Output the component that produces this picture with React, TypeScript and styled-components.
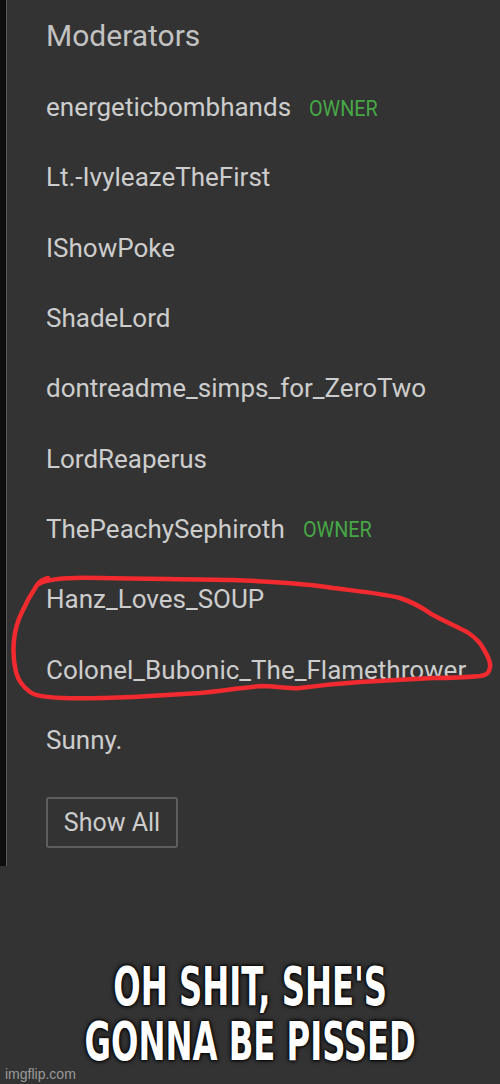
import React from "react";
import styled, { createGlobalStyle } from "styled-components";

const GlobalStyle = createGlobalStyle`
  html, body {
    margin: 0;
    padding: 0;
    background: #333333;
  }
  body {
    font-family: Roboto, "Liberation Sans", sans-serif;
  }
`;

interface Moderator {
  name: string;
  owner?: boolean;
}

const moderators: Moderator[] = [
  { name: "energeticbombhands", owner: true },
  { name: "Lt.-IvyleazeTheFirst" },
  { name: "IShowPoke" },
  { name: "ShadeLord" },
  { name: "dontreadme_simps_for_ZeroTwo" },
  { name: "LordReaperus" },
  { name: "ThePeachySephiroth", owner: true },
  { name: "Hanz_Loves_SOUP" },
  { name: "Colonel_Bubonic_The_Flamethrower" },
  { name: "Sunny." },
];

// hand-drawn loop around the two names, page coordinates
const scribblePath =
  "M37 585 C 45 579, 70 577, 100 578 C 150 579, 200 579, 233 580 C 280 582, 310 584, 333 588 C 365 592, 385 594, 400 598 C 418 604, 425 610, 433 615 C 450 624, 460 628, 467 632 C 476 638, 480 642, 483 648 C 488 656, 491 662, 490 667 C 489 673, 487 675, 480 676 C 460 678, 445 678, 433 678 C 400 680, 380 681, 360 682 C 330 684, 315 686, 300 688 C 285 689, 275 686, 262 686 C 240 688, 220 691, 200 693 C 170 695, 150 696, 133 697 C 110 698, 85 699, 62 698 C 45 697, 36 696, 30 692 C 22 686, 18 680, 16 672 C 13 660, 13 650, 14 640 C 15 630, 18 620, 22 612 C 26 603, 31 594, 37 585 C 40 581, 44 579, 48 578";

const App = () => {
  return (
    <Page>
      <GlobalStyle />
      <Panel>
        <EdgeStrip />
        <Sidebar>
          <Heading>Moderators</Heading>
          <ModList>
            {moderators.map((mod) => (
              <ModRow key={mod.name}>
                <ModName>{mod.name}</ModName>
                {mod.owner && <OwnerTag>OWNER</OwnerTag>}
              </ModRow>
            ))}
          </ModList>
          <ShowAllButton>Show All</ShowAllButton>
          <Scribble viewBox="0 0 500 866">
            <path
              d={scribblePath}
              fill="none"
              stroke="#f02a2e"
              strokeWidth="4.5"
              strokeLinecap="round"
              strokeLinejoin="round"
            />
          </Scribble>
        </Sidebar>
      </Panel>
      <Caption>
        <CaptionText>
          OH SHIT, SHE'S
          <br />
          GONNA BE PISSED
        </CaptionText>
        <Watermark>imgflip.com</Watermark>
      </Caption>
    </Page>
  );
};

const Page = styled.div`
  width: 500px;
  height: 1084px;
  display: flex;
  flex-direction: column;
  background: #333333;
  overflow: hidden;
`;

const Panel = styled.div`
  height: 866px;
  flex-shrink: 0;
  display: flex;
`;

const EdgeStrip = styled.div`
  width: 6px;
  flex-shrink: 0;
  background: #0e0e0e;
  border-right: 1px solid #5a5a5a;
`;

const Sidebar = styled.div`
  position: relative;
  flex: 1;
  padding-left: 39px;
  background: #333333;
`;

const Heading = styled.h2`
  margin: 0;
  height: 72px;
  line-height: 72px;
  font-size: 30px;
  font-weight: 400;
  color: #c2c2c2;
`;

const ModList = styled.div`
  display: flex;
  flex-direction: column;
`;

const ModRow = styled.div`
  height: 70.3px;
  display: flex;
  align-items: center;
  gap: 18px;
`;

const ModName = styled.span`
  font-size: 26px;
  color: #cdcdcd;
`;

const OwnerTag = styled.span`
  font-size: 22px;
  color: #46a746;
  transform: scaleX(0.9);
  transform-origin: left center;
  margin-top: 2px;
`;

const ShowAllButton = styled.button`
  margin-top: 22px;
  width: 132px;
  height: 51px;
  background: transparent;
  border: 2px solid #5e5e5e;
  border-radius: 3px;
  font-family: Roboto, "Liberation Sans", sans-serif;
  font-size: 25px;
  color: #cdcdcd;
  padding: 0;
`;

const Scribble = styled.svg`
  position: absolute;
  left: -7px;
  top: 0;
  width: 500px;
  height: 866px;
  pointer-events: none;
`;

const Caption = styled.div`
  position: relative;
  flex: 1;
  display: flex;
  flex-direction: column;
  align-items: center;
  padding-top: 93px;
  background: #333333;
`;

const CaptionText = styled.div`
  font-family: "DejaVu Sans Condensed", "DejaVu Sans", sans-serif;
  font-weight: 700;
  font-size: 52px;
  line-height: 53px;
  text-align: center;
  white-space: nowrap;
  color: #ffffff;
  transform: scale(0.69, 1.04);
  transform-origin: center top;
  text-shadow: 0 0 6px #000, 0 0 4px #000, 0 0 2px #000;
`;

const Watermark = styled.div`
  position: absolute;
  left: 5px;
  bottom: 2px;
  font-family: "Liberation Sans", Arial, sans-serif;
  font-size: 14px;
  color: #9a9a9a;
`;

export default App;
